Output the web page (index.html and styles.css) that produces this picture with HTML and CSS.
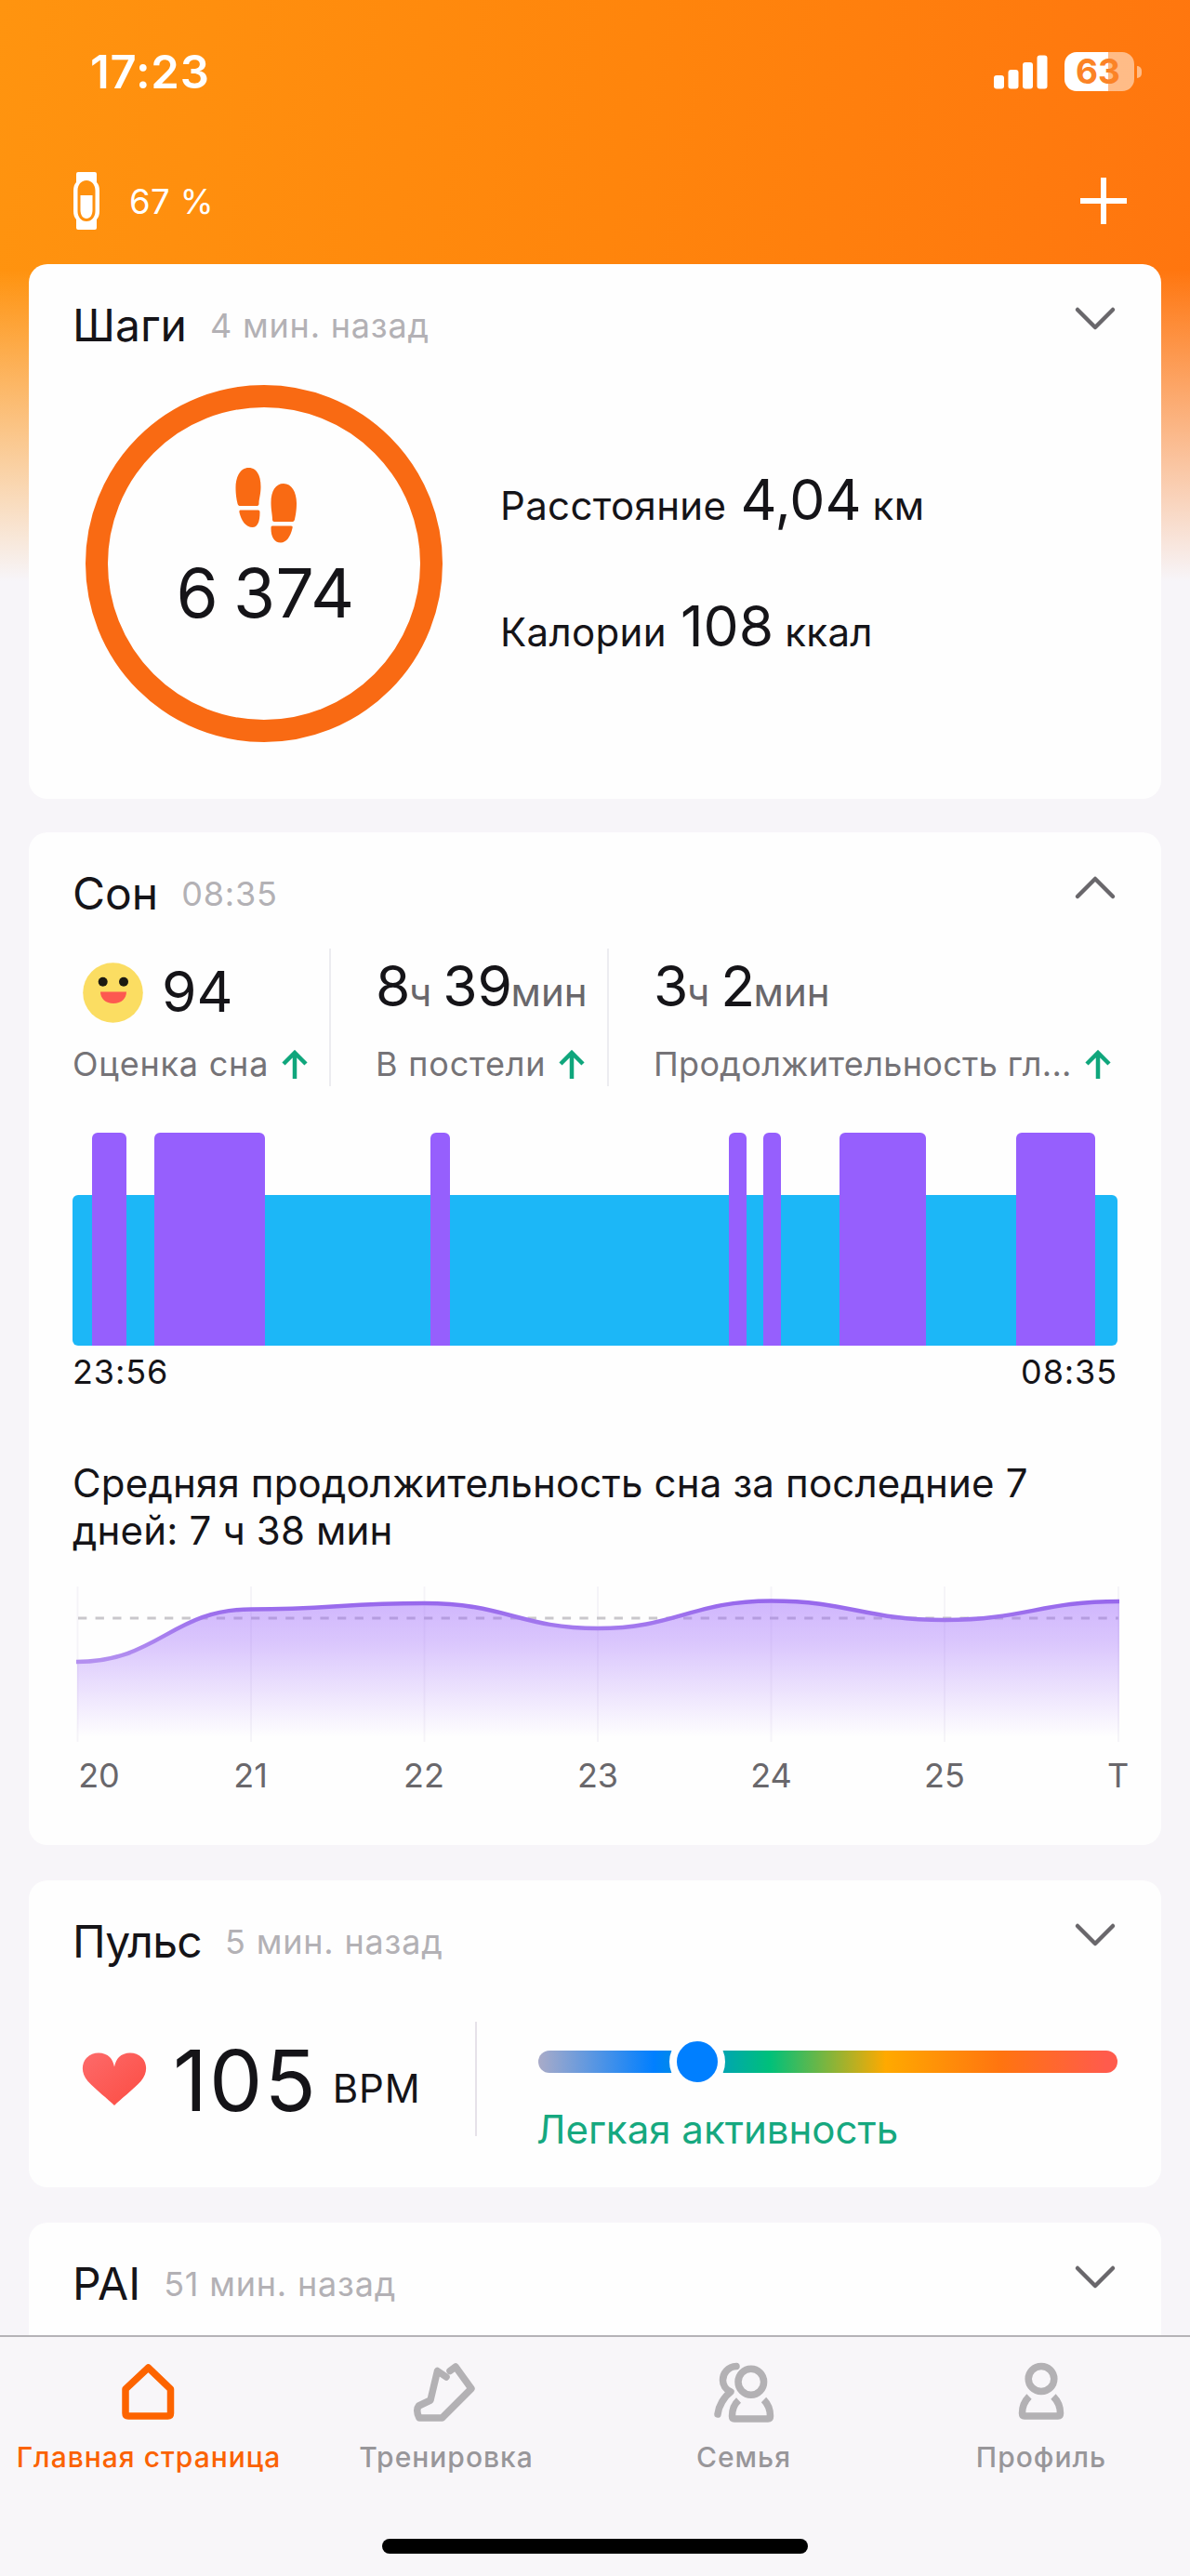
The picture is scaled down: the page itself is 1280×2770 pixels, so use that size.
FILE: index.html
```html
<!DOCTYPE html>
<html lang="ru">
<head>
  <meta charset="UTF-8">
  <meta name="viewport" content="width=device-width, initial-scale=1.0">
  <title>Главная страница</title>
  <link rel="stylesheet" href="styles.css">
</head>
<body>
  <main class="content">
    <div class="status-bar">
      <span class="time">17:23</span>
      <div class="status-icons">
        <svg class="signal" width="58" height="37" viewBox="0 0 58 37" fill="#fff">
          <rect x="0" y="22" width="11" height="14.5" rx="3"/>
          <rect x="15.5" y="16" width="11" height="20.5" rx="3"/>
          <rect x="31" y="8" width="11" height="28.5" rx="3"/>
          <rect x="46.5" y="0.5" width="11" height="36" rx="3"/>
        </svg>
        <div class="battery"><span>63</span></div>
        <div class="battery-cap"></div>
      </div>
    </div>

    <div class="toolbar">
      <svg width="30" height="64" viewBox="0 0 30 64">
        <path fill="#fff" fill-rule="evenodd" d="M6 1h18a2 2 0 0 1 2 2v9c2 2 3 5 3 9v22c0 4-1 7-3 9v9a2 2 0 0 1-2 2H6a2 2 0 0 1-2-2v-9c-2-2-3-5-3-9V21c0-4 1-7 3-9V3a2 2 0 0 1 2-2zM15 10C9 10 5.500 15 5.500 21v22c0 6 3.500 11 9.500 11s9.500-5 9.500-11V21c0-6-3.500-11-9.500-11z"/>
        <path fill="#fff" d="M8.500 26h13v16c0 5-2.500 9-6.500 9s-6.500-4-6.500-9z"/>
      </svg>
      <span class="band-charge">67 %</span>
      <svg class="add" width="50" height="50" viewBox="0 0 50 50">
        <path d="M25 0v50M0 25h50" stroke="#fff" stroke-width="6"/>
      </svg>
    </div>

    <section class="card steps">
      <div class="card-header">
        <h2>Шаги</h2>
        <span class="ago">4 мин. назад</span>
        <svg class="chevron" width="46" height="28" viewBox="0 0 46 28"><path d="M4 4l19 19L42 4"/></svg>
      </div>
      <div class="steps-body">
        <div class="ring">
          <svg width="68" height="82" viewBox="0 0 68 82" fill="#f96a13">
            <path d="M15.500 0C7 0 1.500 9 1.500 21c0 8 1 13 2 17.500 .5 2 1.500 2.500 3 2.500h18c1.500 0 2-1 2-2.500 0-5 2-10 2-18C28.500 8 24 0 15.500 0z"/>
            <path d="M6.500 45.500h19c1.500 0 2 .8 2 2.500C27.500 58 25 64 19.500 64c-7 0-12-7-14-16-.3-1.500 0-2.500 1-2.500z"/>
            <path d="M53 17c8.500 0 14 9 14 21 0 8-1 13-2 17.500-.5 2-1.500 2.500-3 2.500H43c-1.500 0-2-1-2-2.500 0-5-1.500-10-1.500-18C39.500 25 44.500 17 53 17z"/>
            <path d="M41 62.500h20c1.500 0 2 .8 1.500 2.500C60.500 74 56 80.500 50 80.500c-7 0-10.500-6-10.500-15.500 0-1.700.3-2.500 1.500-2.500z"/>
          </svg>
          <span class="steps-count">6 374</span>
        </div>
        <div class="steps-stats">
          <p><span>Расстояние</span><b>4,04</b><span>км</span></p>
          <p><span>Калории</span><b>108</b><span>ккал</span></p>
        </div>
      </div>
    </section>

    <section class="card sleep">
      <div class="card-header">
        <h2>Сон</h2>
        <span class="ago">08:35</span>
        <svg class="chevron" width="46" height="28" viewBox="0 0 46 28"><path d="M4 24L23 5l19 19"/></svg>
      </div>
      <div class="metrics">
        <div class="metric-score">
          <div class="value">
            <svg width="65" height="65" viewBox="0 0 65 65">
              <circle cx="32.500" cy="32.500" r="32.300" fill="#fbdd62"/>
              <ellipse cx="21.700" cy="20.700" rx="5" ry="5" fill="#1c1a12"/>
              <ellipse cx="44" cy="20.700" rx="5" ry="5" fill="#1c1a12"/>
              <path d="M19 31.500h28c0 7-5.500 12.500-14 12.500s-14-5.500-14-12.500z" fill="#fd5950"/>
            </svg>
            <b>94</b>
          </div>
          <div class="label"><span>Оценка сна</span><svg class="up" width="28" height="32" viewBox="0 0 28 32"><path d="M14 31V3M2 15L14 3l12 12"/></svg></div>
        </div>
        <div class="metric-bed">
          <div class="value"><b>8</b><i>ч</i><b class="second">39</b><i>мин</i></div>
          <div class="label"><span>В постели</span><svg class="up" width="28" height="32" viewBox="0 0 28 32"><path d="M14 31V3M2 15L14 3l12 12"/></svg></div>
        </div>
        <div class="metric-deep">
          <div class="value"><b>3</b><i>ч</i><b class="second">2</b><i>мин</i></div>
          <div class="label"><span>Продолжительность гл...</span><svg class="up" width="28" height="32" viewBox="0 0 28 32"><path d="M14 31V3M2 15L14 3l12 12"/></svg></div>
        </div>
      </div>

      <!-- light / deep phases, widths in px -->
      <div class="phases">
        <div class="light" style="width: 21px"></div>
        <div class="deep" style="width: 37px"></div>
        <div class="light" style="width: 30px"></div>
        <div class="deep" style="width: 119px"></div>
        <div class="light" style="width: 178px"></div>
        <div class="deep" style="width: 21px"></div>
        <div class="light" style="width: 301px"></div>
        <div class="deep" style="width: 19px"></div>
        <div class="light" style="width: 18px"></div>
        <div class="deep" style="width: 19px"></div>
        <div class="light" style="width: 63px"></div>
        <div class="deep" style="width: 93px"></div>
        <div class="light" style="width: 97px"></div>
        <div class="deep" style="width: 85px"></div>
        <div class="light" style="width: 24px"></div>
      </div>
      <div class="phases-time"><span>23:56</span><span>08:35</span></div>

      <p class="average">Средняя продолжительность сна за последние 7<br>дней: 7 ч 38 мин</p>

      <svg class="week" width="1140" height="230" viewBox="80 1700 1140 230">
        <defs>
          <linearGradient id="fill" gradientUnits="userSpaceOnUse" x1="0" y1="1722" x2="0" y2="1868">
            <stop offset="0" stop-color="#9a62fb" stop-opacity=".46"/>
            <stop offset=".3" stop-color="#9a62fb" stop-opacity=".36"/>
            <stop offset="1" stop-color="#9a62fb" stop-opacity="0"/>
          </linearGradient>
          <linearGradient id="line" gradientUnits="userSpaceOnUse" x1="0" y1="1722" x2="0" y2="1790">
            <stop offset="0" stop-color="#9768ec"/>
            <stop offset="1" stop-color="#b592f0"/>
          </linearGradient>
        </defs>
        <path class="grid" d="M83.500 1706v167M270 1706v167M456.500 1706v167M643 1706v167M829.500 1706v167M1016 1706v167M1203 1706v167"/>
        <path class="avg-line" d="M84 1740H1203"/>
        <path fill="url(#fill)" d="M83 1787C170 1787 185 1730.500 270 1730.500S370 1724 456.500 1724 560 1751 643 1751 745 1721.500 829.500 1721.500 930 1742 1016 1742 1120 1722 1204 1722V1873H83z"/>
        <path fill="none" stroke="url(#line)" stroke-width="4.500" d="M82 1787C170 1787 185 1730.500 270 1730.500S370 1724 456.500 1724 560 1751 643 1751 745 1721.500 829.500 1721.500 930 1742 1016 1742 1120 1722 1204 1722"/>
        <g class="days">
          <text x="106.500" y="1921.500">20</text>
          <text x="269.500" y="1921.500">21</text>
          <text x="456" y="1921.500">22</text>
          <text x="643" y="1921.500">23</text>
          <text x="829.500" y="1921.500">24</text>
          <text x="1016" y="1921.500">25</text>
          <text x="1202.500" y="1921.500">T</text>
        </g>
      </svg>
    </section>

    <section class="card pulse">
      <div class="card-header">
        <h2>Пульс</h2>
        <span class="ago">5 мин. назад</span>
        <svg class="chevron" width="46" height="28" viewBox="0 0 46 28"><path d="M4 4l19 19L42 4"/></svg>
      </div>
      <div class="pulse-body">
        <div class="bpm">
          <svg width="70" height="58" viewBox="0 0 70 58">
            <defs>
              <linearGradient id="heart" x1="0" y1="0" x2="1" y2="1">
                <stop offset="0" stop-color="#fd6a6a"/>
                <stop offset="1" stop-color="#fc4c42"/>
              </linearGradient>
            </defs>
            <path fill="url(#heart)" d="M35 57C28 50 16 41 6.500 31 -1 22.500-.5 12 5 6 12-1.500 24-1 30 5c2.500 2.500 4 6 5 10.500C36 11 37.500 7.500 40 5c6-6 18-6.500 25 1 5.500 6 6 16.500-1.500 25C54 41 42 50 35 57z"/>
          </svg>
          <b>105</b>
          <span class="unit">BPM</span>
        </div>
        <div class="zone">
          <div class="scale"><div class="thumb"></div></div>
          <span class="zone-name">Легкая активность</span>
        </div>
      </div>
    </section>

    <section class="card pai">
      <div class="card-header">
        <h2>PAI</h2>
        <span class="ago">51 мин. назад</span>
        <svg class="chevron" width="46" height="28" viewBox="0 0 46 28"><path d="M4 4l19 19L42 4"/></svg>
      </div>
    </section>
  </main>

  <nav class="tabbar">
    <div class="tabs">
      <a class="tab active">
        <svg width="80" height="72" viewBox="120 2536 80 72"><path d="M159.500 2546L135 2569v26q0 3 3 3h42.500q3 0 3-3v-26z"/></svg>
        <span>Главная страница</span>
      </a>
      <a class="tab">
        <svg width="80" height="72" viewBox="440 2536 80 72"><path d="M480 2556l-9.500-6.500L463 2581l-12.500 6c-2.500 3-2 8 .5 13h24.500L507 2568.500 490 2545l-6 4.500"/></svg>
        <span>Тренировка</span>
      </a>
      <a class="tab">
        <svg width="80" height="72" viewBox="760 2536 80 72"><path d="M792 2544.500C783 2545 777.500 2552 777.500 2559.500c0 5 3 10 8.500 12.500C779 2577 773 2587 772 2596"/><ellipse cx="807.800" cy="2561.300" rx="13.800" ry="14"/><path stroke-linecap="butt" d="M794.500 2581C790 2585 787.500 2591 787.500 2598q0 3 2.500 3h36q2.500 0 2.500-3C828.500 2591 826 2585 821.500 2580.500"/></svg>
        <span>Семья</span>
      </a>
      <a class="tab">
        <svg width="80" height="72" viewBox="1080 2536 80 72"><ellipse cx="1120" cy="2558" rx="13.800" ry="13.500"/><path stroke-linecap="butt" d="M1107 2577C1102 2582 1099.500 2588 1099.500 2595q0 3 2.500 3h36q2.500 0 2.500-3C1140.500 2588 1138 2582 1133 2577"/></svg>
        <span>Профиль</span>
      </a>
    </div>
    <div class="home-indicator"></div>
  </nav>
</body>
</html>
```

FILE: styles.css
```css
* {
  box-sizing: border-box;
}

body {
  margin: 0;
  width: 1280px;
  height: 2770px;
  overflow: hidden;
  display: flex;
  flex-direction: column;
  font-family: Inter, "Noto Sans", sans-serif;
  color: #151418;
  background-color: #f7f5f9;
}

h2, p {
  margin: 0;
}

h2, b, i {
  font-weight: 400;
  font-style: normal;
}

svg {
  display: block;
  flex: none;
}

span, b, i, h2 {
  white-space: nowrap;
}

.content {
  height: 2511px;
  overflow: hidden;
  padding: 0 31px;
  background-image:
    linear-gradient(to bottom, rgba(247, 245, 249, 0) 290px, #f7f5f9 625px),
    linear-gradient(100deg, #ff940f, #ff850c 50%, #ff740f);
  background-size: 1280px 640px;
  background-repeat: no-repeat;
}

/* status bar */
.status-bar {
  height: 154px;
  display: flex;
  align-items: center;
  justify-content: space-between;
  padding: 0 21px 0 66px;
  color: #fff;
}

.time {
  font-size: 49px;
  font-weight: 600;
  letter-spacing: 0.8px;
}

.status-icons {
  display: flex;
  align-items: center;
}

.battery {
  width: 75px;
  height: 42px;
  margin-left: 18px;
  padding-right: 3px;
  border-radius: 13px;
  background: linear-gradient(to right, #fff 47px, rgba(255, 255, 255, 0.5) 47px);
  color: #fb8326;
  font-size: 37px;
  font-weight: 700;
  line-height: 42px;
  text-align: center;
}

.battery-cap {
  width: 5px;
  height: 13px;
  margin-left: 3px;
  border-radius: 0 6px 6px 0;
  background: rgba(255, 255, 255, 0.5);
}

/* toolbar */
.toolbar {
  height: 130px;
  display: flex;
  align-items: center;
  padding: 0 37px 6px 47px;
  color: #fff;
}

.band-charge {
  font-size: 36.5px;
  margin: 2px 0 0 31px;
  letter-spacing: 0.4px;
}

.add {
  margin-left: auto;
}

/* cards */
.card {
  background: #fefefe;
  border-radius: 20px;
  padding: 0 47px;
}

.card-header {
  height: 130px;
  display: flex;
  align-items: center;
}

h2 {
  font-size: 48px;
}

.ago {
  font-size: 36px;
  margin: 2px 0 0 25px;
  color: #b3b1b5;
  letter-spacing: 0.8px;
}

.chevron {
  margin: 0 1px 12px auto;
  fill: none;
  stroke: #69676b;
  stroke-width: 4.5;
  stroke-linecap: round;
  stroke-linejoin: round;
}

.steps {
  height: 575px;
}

.steps-body {
  display: flex;
}

.ring {
  width: 384px;
  height: 384px;
  margin-left: 14px;
  border: 24.5px solid #f96a13;
  border-radius: 50%;
  display: flex;
  flex-direction: column;
  align-items: center;
  padding: 65px 0 0 3px;
}

.steps-count {
  font-size: 73px;
  line-height: 90px;
  margin-top: 8px;
  word-spacing: -5px;
  letter-spacing: 0.4px;
}

.steps-stats {
  margin-left: 62px;
  padding-top: 78px;
}

.steps-stats p {
  display: flex;
  align-items: baseline;
  height: 136px;
  font-size: 42px;
  line-height: 90px;
  letter-spacing: 0.35px;
}

.steps-stats b {
  font-size: 60.5px;
  margin: 0 12px 0 15px;
  letter-spacing: 0;
}

.sleep {
  height: 1089px;
  margin-top: 36px;
}

.metrics {
  display: flex;
  height: 148px;
  margin-top: -5px;
}

.metric-score {
  width: 278px;
  border-right: 2px solid #ececf0;
}

.metric-bed {
  width: 299px;
  padding-left: 48px;
  border-right: 2px solid #ececf0;
}

.metric-deep {
  padding-left: 48px;
}

.value {
  height: 99px;
  display: flex;
  align-items: baseline;
  line-height: 80px;
}

.metric-score .value {
  align-items: center;
  padding: 0 0 4px 11px;
}

.metric-score b {
  margin: -4px 0 0 20px;
}

.value b {
  font-size: 60.5px;
}

.value .second {
  margin-left: 12px;
}

.value i {
  font-size: 42px;
  margin-left: -1.5px;
  color: #69676b;
}

.label {
  display: flex;
  align-items: center;
  font-size: 36px;
  line-height: 51px;
  letter-spacing: 0.8px;
  color: #757377;
}

.metric-deep .label {
  letter-spacing: 0.33px;
}

.up {
  margin-left: 14px;
  fill: none;
  stroke: #0fa67c;
  stroke-width: 4.5;
}

.phases {
  display: flex;
  align-items: flex-end;
  height: 229px;
  margin-top: 50px;
}

.light {
  height: 162px;
  background: #1cb7f7;
}

.light:first-child {
  border-radius: 6px 0 0 6px;
}

.light:last-child {
  border-radius: 0 6px 6px 0;
}

.deep {
  height: 229px;
  background: #965ffd;
  border-radius: 6px 6px 0 0;
}

.phases-time {
  display: flex;
  justify-content: space-between;
  font-size: 36px;
  line-height: 57px;
  letter-spacing: 0.9px;
}

.average {
  margin-top: 65px;
  font-size: 42px;
  line-height: 51px;
  letter-spacing: 0.17px;
}

.week {
  margin: 29px 0 0 2px;
}

.grid {
  stroke: #6a50a0;
  stroke-opacity: 0.06;
  stroke-width: 2;
}

.avg-line {
  stroke: #c9c7cc;
  stroke-width: 3;
  stroke-dasharray: 9.3;
}

.days {
  font-size: 36px;
  text-anchor: middle;
  fill: #69676b;
}

.pulse {
  height: 330px;
  margin-top: 38px;
}

.pulse h2 {
  letter-spacing: -0.7px;
}

.pulse-body {
  display: flex;
  height: 123px;
  margin-top: 22px;
}

.bpm {
  display: flex;
  align-items: center;
  width: 435px;
  padding-left: 10px;
  border-right: 2px solid #e6e2e9;
}

.bpm b {
  font-size: 91px;
  line-height: 100px;
  margin: 2px 0 0 28px;
  letter-spacing: 2px;
}

.unit {
  font-size: 42px;
  margin: 20px 0 0 16px;
  letter-spacing: 0.8px;
}

.zone {
  width: 623px;
  margin-left: 66px;
  padding-top: 31px;
}

.scale {
  position: relative;
  height: 24px;
  border-radius: 12px;
  background: linear-gradient(to right, #a9abc8, #007fff 20%, #00c07a 40%, #ffa900 60%, #ff7410 80%, #ff5b4c 98%);
}

.thumb {
  position: absolute;
  left: 141px;
  top: -18px;
  width: 60px;
  height: 60px;
  border: 8.5px solid #fefefe;
  border-radius: 50%;
  background: #007fff;
}

.zone-name {
  display: block;
  margin: 36px 0 0 -2px;
  font-size: 42px;
  line-height: 50px;
  color: #16a87f;
}

.pai {
  height: 330px;
  margin-top: 38px;
}

/* bottom navigation */
.tabbar {
  height: 259px;
  border-top: 2px solid #b5b3b7;
  background: #f8f6f9;
}

.tabs {
  display: flex;
}

.tab {
  width: 320px;
  padding-top: 23px;
  display: flex;
  flex-direction: column;
  align-items: center;
  font-size: 30px;
  font-weight: 500;
  line-height: 40px;
  letter-spacing: 1px;
  color: #98969a;
}

.tab svg {
  margin-bottom: 14px;
  fill: none;
  stroke: #b3b1b4;
  stroke-width: 7.5;
  stroke-linejoin: round;
  stroke-linecap: round;
}

.tab.active {
  color: #fb6200;
}

.tab.active svg {
  stroke: #fd6400;
}

.home-indicator {
  width: 458px;
  height: 16px;
  margin: 68px auto 0;
  border-radius: 8px;
  background: #000;
}
```
